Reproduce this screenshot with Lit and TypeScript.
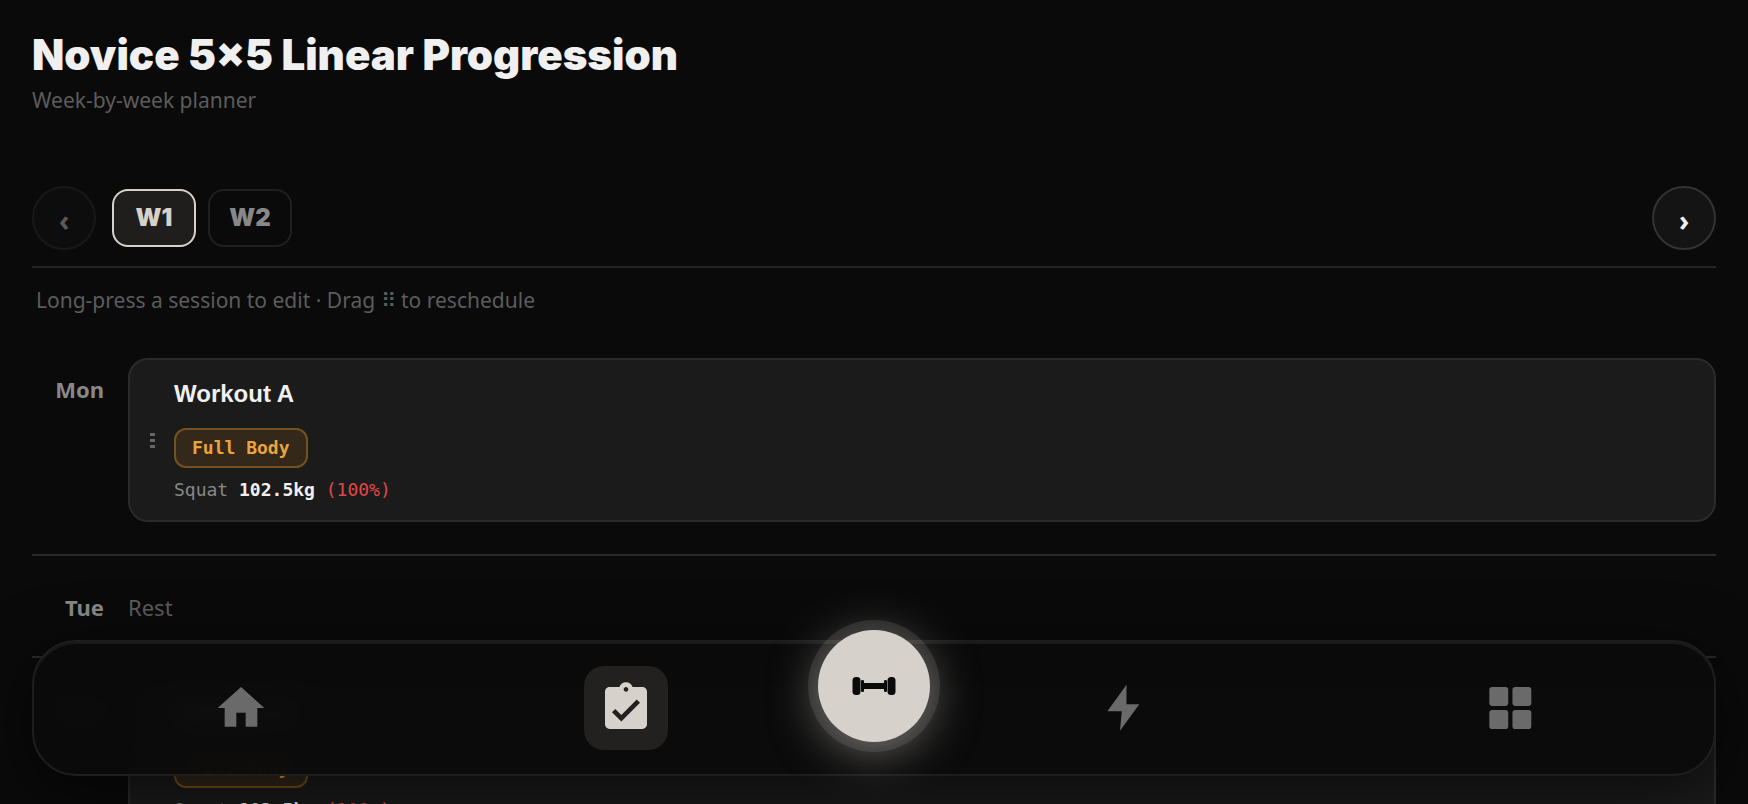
import { LitElement, html, css, svg } from "lit";
import { customElement, property, state } from "lit/decorators.js";

interface Session {
  title: string;
  tag: string;
  lift: string;
  load: string;
  percent: string;
}

interface Day {
  label: string;
  session?: Session;
}

const workoutA: Session = {
  title: "Workout A",
  tag: "Full Body",
  lift: "Squat",
  load: "102.5kg",
  percent: "(100%)",
};

const workoutB: Session = { ...workoutA, title: "Workout B" };

const DAYS: Day[] = [
  { label: "Mon", session: workoutA },
  { label: "Tue" },
  { label: "Wed", session: workoutB },
];

const homeIcon = svg`<path d="M10 20v-6h4v6h5v-8h3L12 3 2 12h3v8z" />`;
const planIcon = svg`<path fill-rule="evenodd" d="M19 3h-4.180C14.400 1.840 13.300 1 12 1s-2.400.840-2.820 2H5c-1.100 0-2 .900-2 2v14c0 1.100.900 2 2 2h14c1.100 0 2-.900 2-2V5c0-1.100-.900-2-2-2zm-7 0c.550 0 1 .450 1 1s-.450 1-1 1-1-.450-1-1 .450-1 1-1zm-2 14.800l-4-4 1.410-1.410L10 14.970l6.590-6.590L18 9.800l-8 8z" />`;
const boltIcon = svg`<path d="M13.500 2 5.300 13.400h6.200L10.700 21.800 19 10.400h-5.500z" />`;
const gridIcon = svg`
  <rect x="4" y="3" width="8.100" height="8.100" rx="1.200" />
  <rect x="13.900" y="3" width="8.100" height="8.100" rx="1.200" />
  <rect x="4" y="12.900" width="8.100" height="8.100" rx="1.200" />
  <rect x="13.900" y="12.900" width="8.100" height="8.100" rx="1.200" />`;

@customElement("session-card")
export class SessionCard extends LitElement {
  @property({ attribute: false }) session!: Session;

  static styles = css`
    :host {
      display: block;
      flex: 1;
      margin-bottom: 12px;
    }
    .card {
      display: flex;
      align-items: center;
      gap: 16px;
      box-sizing: border-box;
      padding: 0 16px;
      border: 2px solid #2a2a2a;
      border-radius: 20px;
      background: #1b1b1b;
    }
    .handle {
      flex: none;
      display: flex;
      padding: 0;
      border: 0;
      background: none;
      color: #666;
      cursor: grab;
    }
    .details {
      padding: 20px 0 16px;
    }
    .title {
      margin: 0 0 20px;
      font: 700 24px/28px "Liberation Sans", Arial, sans-serif;
      color: #f0f0f0;
    }
    .tag {
      display: inline-block;
      box-sizing: border-box;
      padding: 0 16px;
      border: 2px solid #74521f;
      border-radius: 12px;
      background: #33281a;
      font: 700 18px/36px "DejaVu Sans Mono", monospace;
      color: #eba43a;
    }
    .lift {
      margin: 0;
      padding-top: 8px;
      font: 18px/28px "DejaVu Sans Mono", monospace;
      color: #888;
    }
    .load {
      color: #f0f0f0;
    }
    .percent {
      color: #e04848;
    }
  `;

  render() {
    const s = this.session;
    return html`
      <article class="card">
        <button class="handle" aria-label="Drag ${s.title}">
          <svg width="12" height="16" viewBox="0 0 12 16" fill="currentColor">
            <path d="M4 1h5v3H4zM4 7h5v3H4zM4 13h5v3H4z" />
          </svg>
        </button>
        <div class="details">
          <h2 class="title">${s.title}</h2>
          <span class="tag">${s.tag}</span>
          <p class="lift">
            ${s.lift} <b class="load">${s.load}</b> <span class="percent">${s.percent}</span>
          </p>
        </div>
      </article>
    `;
  }
}

@customElement("bottom-nav")
export class BottomNav extends LitElement {
  static styles = css`
    :host {
      position: fixed;
      left: 32px;
      right: 32px;
      bottom: 28px;
    }
    .bar {
      display: flex;
      align-items: center;
      box-sizing: border-box;
      height: 136px;
      padding: 0 14px;
      border: 2px solid #1e1e1e;
      border-radius: 44px;
      background: rgba(10, 10, 10, 0.96);
      backdrop-filter: blur(12px);
      box-shadow: 0 16px 64px rgba(0, 0, 0, 0.6), inset 0 2px 0 #1a1a1a;
    }
    .item {
      flex: 1;
      display: flex;
      justify-content: center;
      color: #6a6a6a;
    }
    .pill {
      display: grid;
      place-items: center;
      width: 84px;
      height: 84px;
      border-radius: 20px;
    }
    .active {
      color: #d6d1cb;
    }
    .active .pill {
      background: #22211f;
    }
    .start {
      flex: none;
      display: grid;
      place-items: center;
      width: 112px;
      height: 112px;
      margin-bottom: 44px;
      padding: 0;
      border: 0;
      border-radius: 50%;
      background: #d6d1cb;
      color: #0a0a0a;
      box-shadow: 0 0 0 10px rgba(214, 209, 203, 0.12), 0 8px 48px rgba(214, 209, 203, 0.5);
    }
  `;

  private item(label: string, icon: unknown, active = false) {
    return html`
      <a class="item ${active ? "active" : ""}" href="#${label.toLowerCase()}" aria-label=${label}>
        <span class="pill">
          <svg width="56" height="56" viewBox="0 0 24 24" fill="currentColor">${icon}</svg>
        </span>
      </a>
    `;
  }

  render() {
    return html`
      <nav class="bar">
        ${this.item("Home", homeIcon)} ${this.item("Plan", planIcon, true)}
        <button class="start" aria-label="Start workout">
          <svg width="44" height="20" viewBox="0 0 44 20" fill="currentColor">
            <rect x="0.500" y="1" width="8" height="18" rx="3.500" />
            <rect x="9" y="4" width="3" height="12" rx="1.200" />
            <rect x="12" y="7" width="20" height="6" />
            <rect x="32" y="4" width="3" height="12" rx="1.200" />
            <rect x="35.500" y="1" width="8" height="18" rx="3.500" />
          </svg>
        </button>
        ${this.item("Activity", boltIcon)} ${this.item("More", gridIcon)}
      </nav>
    `;
  }
}

@customElement("app-root")
export class AppRoot extends LitElement {
  @state() private week = 1;

  static styles = css`
    :host {
      display: block;
      box-sizing: border-box;
      height: 100vh;
      overflow: hidden;
      padding: 32px 32px 0;
      background: #0a0a0a;
      font-family: "Noto Sans", sans-serif;
      font-size: 22px;
      line-height: 32px;
      color: #5c5c5c;
    }
    .heading {
      margin: 0;
      font: 900 42px/46px Inter, sans-serif;
      color: #f0f0f0;
    }
    .sub {
      margin: 6px 0 0;
      font-size: 21px;
    }
    .weeks {
      display: flex;
      align-items: center;
      gap: 12px;
      margin-top: 70px;
      padding-bottom: 16px;
      border-bottom: 2px solid #252525;
    }
    .step {
      box-sizing: border-box;
      width: 64px;
      height: 64px;
      padding: 4px 0 0;
      border: 2px solid #333;
      border-radius: 50%;
      background: #141414;
      font: 700 28px/56px "Noto Sans", sans-serif;
      color: #f0f0f0;
    }
    .step:disabled {
      opacity: 0.35;
    }
    .tabs {
      flex: 1;
      display: flex;
      gap: 12px;
      padding-left: 4px;
    }
    .tab {
      box-sizing: border-box;
      width: 84px;
      height: 58px;
      padding: 0;
      border: 2px solid #202020;
      border-radius: 16px;
      background: transparent;
      font: 900 24px/28px Inter, sans-serif;
      color: #888;
    }
    .selected {
      border-color: #d6d1cb;
      background: #201e1c;
      color: #d6d1cb;
    }
    .hint {
      margin: 16px 4px 22px;
      font-size: 21px;
    }
    .day {
      display: flex;
      gap: 24px;
      min-height: 60px;
      padding: 20px 0;
      border-bottom: 2px solid #2a2a2a;
      line-height: 30px;
    }
    .name {
      box-sizing: border-box;
      width: 72px;
      padding-top: 16px;
      text-align: right;
      font-weight: 700;
      color: #888;
    }
    .rest {
      padding-top: 16px;
    }
  `;

  private tab(n: number) {
    const on = this.week === n;
    return html`<button
      class="tab ${on ? "selected" : ""}"
      aria-pressed=${on}
      @click=${() => (this.week = n)}
    >
      W${n}
    </button>`;
  }

  render() {
    return html`
      <header>
        <h1 class="heading">Novice 5×5 Linear Progression</h1>
        <p class="sub">Week-by-week planner</p>
      </header>
      <div class="weeks">
        <button class="step" aria-label="Previous week" ?disabled=${this.week === 1} @click=${() => this.week--}>‹</button>
        <div class="tabs">${this.tab(1)}${this.tab(2)}</div>
        <button class="step" aria-label="Next week" ?disabled=${this.week === 2} @click=${() => this.week++}>›</button>
      </div>
      <p class="hint">Long-press a session to edit · Drag ⠿ to reschedule</p>
      <main>
        ${DAYS.map(
          (day) => html`
            <section class="day">
              <div class="name">${day.label}</div>
              ${day.session
                ? html`<session-card .session=${day.session}></session-card>`
                : html`<div class="rest">Rest</div>`}
            </section>
          `
        )}
      </main>
      <bottom-nav></bottom-nav>
    `;
  }
}
